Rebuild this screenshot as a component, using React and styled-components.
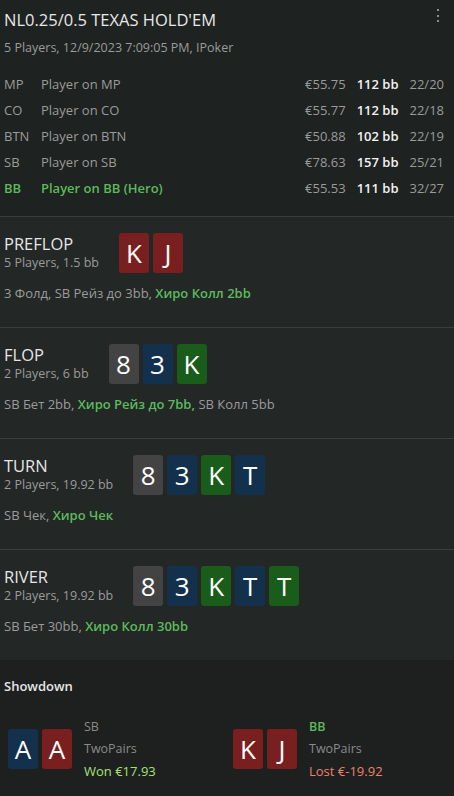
import React from 'react';
import styled, { createGlobalStyle } from 'styled-components';

const GlobalStyle = createGlobalStyle`
  html, body {
    margin: 0;
    padding: 0;
    background: #1e2220;
  }
  body {
    font-family: "Open Sans", "Noto Sans", "Liberation Sans", sans-serif;
    color: #e4e4e4;
  }
`;

const Page = styled.div`
  width: 454px;
  min-height: 796px;
  display: flex;
  flex-direction: column;
  background: #1e2220;
`;

const Header = styled.div`
  position: relative;
  padding: 8px 10px 15px 4px;
  border-bottom: 1px solid #3a3e3c;
`;

const Title = styled.div`
  font-size: 16.5px;
  line-height: 24px;
  color: #e8e8e8;
`;

const Subtitle = styled.div`
  font-size: 12.5px;
  line-height: 20px;
  margin-top: 6px;
  color: #9b9b9b;
`;

const MenuDots = styled.div`
  position: absolute;
  top: 9px;
  right: 15px;
  display: flex;
  flex-direction: column;
  gap: 3.5px;
  span {
    width: 2px;
    height: 2px;
    background: #8c8c8c;
  }
`;

const Players = styled.div`
  margin-top: 13px;
`;

const PlayerRow = styled.div`
  display: grid;
  grid-template-columns: 26px 1fr auto auto auto;
  column-gap: 11px;
  height: 26px;
  align-items: center;
  font-size: 13px;
  color: ${({ hero }) => (hero ? '#5cba5c' : '#9b9b9b')};
  font-weight: ${({ hero }) => (hero ? 600 : 400)};
`;

const Amount = styled.span`
  color: #9b9b9b;
  font-weight: 400;
`;

const Stack = styled.span`
  color: #f2f2f2;
  font-weight: 600;
`;

const Ratio = styled.span`
  color: #9b9b9b;
  font-weight: 400;
`;

const Street = styled.div`
  background: #232726;
  padding: 16px 4px 24px;
  border-bottom: ${({ last }) => (last ? 'none' : '1px solid #3a3e3c')};
`;

const StreetHead = styled.div`
  display: flex;
  align-items: center;
  gap: 20px;
  height: 40px;
`;

const StreetInfo = styled.div`
  display: flex;
  flex-direction: column;
`;

const StreetName = styled.div`
  font-size: 16.5px;
  line-height: 20px;
  color: #e6e6e6;
`;

const StreetMeta = styled.div`
  font-size: 12.5px;
  line-height: 18px;
  color: #9b9b9b;
`;

const Cards = styled.div`
  display: flex;
  gap: 4px;
`;

const suitColors = {
  h: '#7a1f1f',
  d: '#13314d',
  c: '#1a5c1a',
  s: '#434343',
};

const Card = styled.div`
  width: 30px;
  height: 40px;
  border-radius: 3px;
  background: ${({ suit }) => suitColors[suit]};
  color: #ffffff;
  font-size: 26px;
  display: flex;
  align-items: center;
  justify-content: center;
  line-height: 1;
`;

const Actions = styled.div`
  margin-top: 10px;
  font-size: 13px;
  line-height: 20px;
  color: #9b9b9b;
  b {
    color: #5cba5c;
    font-weight: 600;
  }
`;

const Showdown = styled.div`
  flex: 1;
  background: #1d201e;
  padding: 16px 0 14px 4px;
`;

const ShowdownTitle = styled.div`
  font-size: 13px;
  line-height: 20px;
  font-weight: 600;
  color: #e6e6e6;
`;

const ShowdownRow = styled.div`
  display: grid;
  grid-template-columns: 225px 1fr;
  margin-top: 20px;
  padding-left: 4px;
`;

const Hand = styled.div`
  display: flex;
  align-items: center;
  gap: 12px;
`;

const HandInfo = styled.div`
  display: flex;
  flex-direction: column;
  font-size: 12.5px;
  line-height: 22px;
  color: #8a8a8a;
`;

const Pos = styled.div`
  color: ${({ hero }) => (hero ? '#5cba5c' : '#8a8a8a')};
  font-weight: ${({ hero }) => (hero ? 600 : 400)};
`;

const Result = styled.div`
  font-size: 13px;
  color: ${({ won }) => (won ? '#a8e07c' : '#ec8270')};
`;

const players = [
  { pos: 'MP', name: 'Player on MP', amount: '€55.75', bb: '112 bb', ratio: '22/20' },
  { pos: 'CO', name: 'Player on CO', amount: '€55.77', bb: '112 bb', ratio: '22/18' },
  { pos: 'BTN', name: 'Player on BTN', amount: '€50.88', bb: '102 bb', ratio: '22/19' },
  { pos: 'SB', name: 'Player on SB', amount: '€78.63', bb: '157 bb', ratio: '25/21' },
  { pos: 'BB', name: 'Player on BB (Hero)', amount: '€55.53', bb: '111 bb', ratio: '32/27', hero: true },
];

const board = [
  ['8', 's'],
  ['3', 'd'],
  ['K', 'c'],
  ['T', 'd'],
  ['T', 'c'],
];

const streets = [
  {
    name: 'PREFLOP',
    meta: '5 Players, 1.5 bb',
    cards: [['K', 'h'], ['J', 'h']],
    actions: (
      <>
        3 Фолд, SB Рейз до 3bb, <b>Хиро Колл 2bb</b>
      </>
    ),
  },
  {
    name: 'FLOP',
    meta: '2 Players, 6 bb',
    cards: board.slice(0, 3),
    actions: (
      <>
        SB Бет 2bb, <b>Хиро Рейз до 7bb,</b> SB Колл 5bb
      </>
    ),
  },
  {
    name: 'TURN',
    meta: '2 Players, 19.92 bb',
    cards: board.slice(0, 4),
    actions: (
      <>
        SB Чек, <b>Хиро Чек</b>
      </>
    ),
  },
  {
    name: 'RIVER',
    meta: '2 Players, 19.92 bb',
    cards: board,
    actions: (
      <>
        SB Бет 30bb, <b>Хиро Колл 30bb</b>
      </>
    ),
  },
];

const CardList = ({ cards }) => (
  <Cards>
    {cards.map(([rank, suit], i) => (
      <Card key={i} suit={suit}>
        {rank}
      </Card>
    ))}
  </Cards>
);

const App = () => {
  return (
    <Page>
      <GlobalStyle />
      <Header>
        <Title>NL0.25/0.5 TEXAS HOLD'EM</Title>
        <Subtitle>5 Players, 12/9/2023 7:09:05 PM, IPoker</Subtitle>
        <MenuDots>
          <span />
          <span />
          <span />
        </MenuDots>
        <Players>
          {players.map((p) => (
            <PlayerRow key={p.pos} hero={p.hero}>
              <span>{p.pos}</span>
              <span>{p.name}</span>
              <Amount>{p.amount}</Amount>
              <Stack>{p.bb}</Stack>
              <Ratio>{p.ratio}</Ratio>
            </PlayerRow>
          ))}
        </Players>
      </Header>

      {streets.map((s, i) => (
        <Street key={s.name} last={i === streets.length - 1}>
          <StreetHead>
            <StreetInfo>
              <StreetName>{s.name}</StreetName>
              <StreetMeta>{s.meta}</StreetMeta>
            </StreetInfo>
            <CardList cards={s.cards} />
          </StreetHead>
          <Actions>{s.actions}</Actions>
        </Street>
      ))}

      <Showdown>
        <ShowdownTitle>Showdown</ShowdownTitle>
        <ShowdownRow>
          <Hand>
            <CardList cards={[['A', 'd'], ['A', 'h']]} />
            <HandInfo>
              <Pos>SB</Pos>
              <div>TwoPairs</div>
              <Result won>Won €17.93</Result>
            </HandInfo>
          </Hand>
          <Hand>
            <CardList cards={[['K', 'h'], ['J', 'h']]} />
            <HandInfo>
              <Pos hero>BB</Pos>
              <div>TwoPairs</div>
              <Result>Lost €-19.92</Result>
            </HandInfo>
          </Hand>
        </ShowdownRow>
      </Showdown>
    </Page>
  );
};

export default App;
